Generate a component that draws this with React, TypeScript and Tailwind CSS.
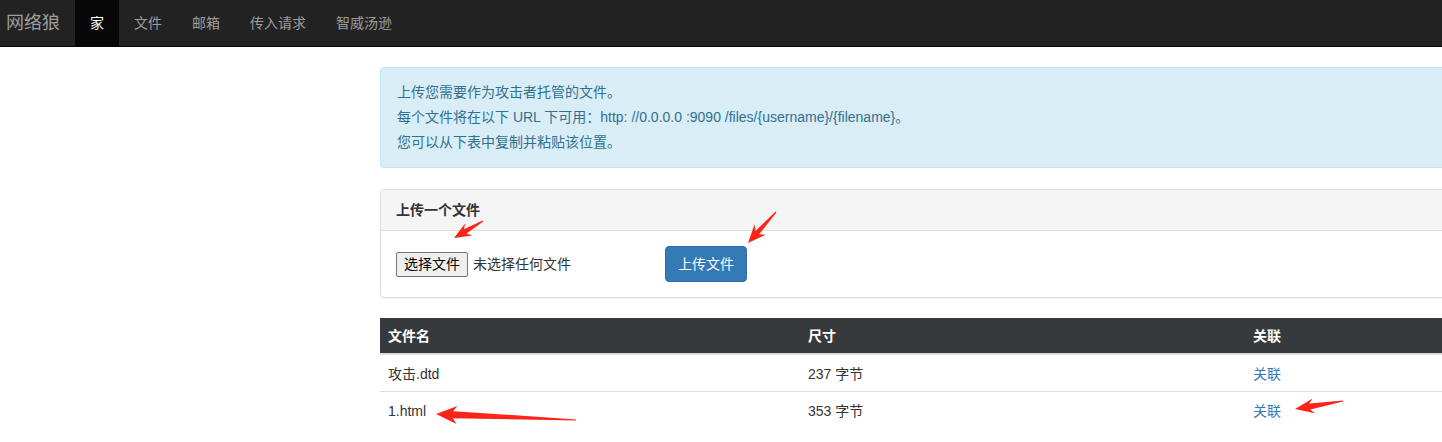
import React from 'react';

const navItems = [
  { label: '家', active: true },
  { label: '文件', active: false },
  { label: '邮箱', active: false },
  { label: '传入请求', active: false },
  { label: '智威汤逊', active: false },
];

const files = [
  { name: '攻击.dtd', size: '237 字节' },
  { name: '1.html', size: '353 字节' },
];

// annotation arrows drawn on top of the screenshot: [tailX, tailY, tipX, tipY, head, wing, shaft]
const arrows: [number, number, number, number, number, number, number][] = [
  [483, 221, 454, 238, 13, 7, 2.5],
  [776, 212, 748, 243, 14, 7.5, 2.5],
  [576, 420, 436, 414, 17, 9, 3.5],
  [1343, 401, 1295, 409, 15, 7.5, 3],
];

function arrowPoints([sx, sy, tx, ty, head, wing, shaft]: (typeof arrows)[number]) {
  const len = Math.hypot(tx - sx, ty - sy);
  const ux = (tx - sx) / len;
  const uy = (ty - sy) / len;
  const nx = -uy;
  const ny = ux;
  const neckX = tx - ux * head;
  const neckY = ty - uy * head;
  const barbX = neckX - ux * 4;
  const barbY = neckY - uy * 4;
  const pts = [
    [sx + nx * 0.6, sy + ny * 0.6],
    [neckX + nx * shaft, neckY + ny * shaft],
    [barbX + nx * wing, barbY + ny * wing],
    [tx, ty],
    [barbX - nx * wing, barbY - ny * wing],
    [neckX - nx * shaft, neckY - ny * shaft],
    [sx - nx * 0.6, sy - ny * 0.6],
  ];
  return pts.map((p) => `${p[0].toFixed(1)},${p[1].toFixed(1)}`).join(' ');
}

export default function App() {
  return (
    <div className="relative min-h-screen w-full overflow-hidden bg-white font-['Liberation_Sans','Noto_Sans_CJK_SC',sans-serif] text-[14px] text-[#333]">
      <header className="flex h-[47px] items-stretch border-b border-[#080808] bg-[#222]">
        <a className="flex w-[75px] items-center pl-[6px] text-[18px] text-[#9d9d9d]">网络狼</a>
        <ul className="flex items-stretch">
          {navItems.map((item) => (
            <li key={item.label}>
              <a
                className={`flex h-full items-center px-[15px] leading-[20px] ${
                  item.active ? 'bg-[#080808] text-white' : 'text-[#9d9d9d]'
                }`}
              >
                {item.label}
              </a>
            </li>
          ))}
        </ul>
      </header>

      <main className="ml-[380px] w-[1140px] pt-[20px]">
        <div className="rounded-[4px] border border-[#bce8f1] bg-[#d9edf7] px-[16px] py-[12px] text-[14px] leading-[25px] text-[#31708f]">
          <p>上传您需要作为攻击者托管的文件。</p>
          <p>每个文件将在以下 URL 下可用：http: //0.0.0.0 :9090 /files/{'{username}'}/{'{filename}'}。</p>
          <p>您可以从下表中复制并粘贴该位置。</p>
        </div>

        <section className="mt-[21px] rounded-[4px] border border-[#ddd] shadow-[0_1px_1px_rgba(0,0,0,0.05)]">
          <div className="h-[41px] rounded-t-[3px] border-b border-[#ddd] bg-[#f5f5f5] px-[15px] py-[10px] font-bold leading-[20px] text-[#333]">
            上传一个文件
          </div>
          <div className="flex items-center p-[15px]">
            <div className="flex w-[269px] items-center">
              <span className="flex h-[25px] items-center rounded-[2px] border border-[#767676] bg-[#efefef] px-[7px] text-[14px] text-black">
                选择文件
              </span>
              <span className="ml-[5px] text-[14px] text-[#333]">未选择任何文件</span>
            </div>
            <button
              type="button"
              className="h-[36px] w-[82px] rounded-[4px] border border-[#2e6da4] bg-[#337ab7] text-[14px] text-white"
            >
              上传文件
            </button>
          </div>
        </section>

        <div className="mt-[20px]">
          <div className="grid h-[37px] grid-cols-[420px_445px_1fr] items-center border-b-2 border-[#ddd] bg-[#373a3c] pt-[2px] font-bold text-white">
            <div className="px-[8px]">文件名</div>
            <div className="px-[8px]">尺寸</div>
            <div className="px-[8px]">关联</div>
          </div>
          {files.map((f, i) => (
            <div
              key={f.name}
              className={`grid h-[37px] grid-cols-[420px_445px_1fr] items-center pt-[2px] ${
                i < files.length - 1 ? 'border-b border-[#ddd]' : ''
              }`}
            >
              <div className="px-[8px]">{f.name}</div>
              <div className="px-[8px]">{f.size}</div>
              <div className="px-[8px]">
                <a className="text-[#337ab7]">关联</a>
              </div>
            </div>
          ))}
        </div>
      </main>

      <svg className="pointer-events-none absolute left-0 top-0" width="1442" height="442">
        {arrows.map((a, i) => (
          <polygon key={i} points={arrowPoints(a)} fill="#fb2418" />
        ))}
      </svg>
    </div>
  );
}
